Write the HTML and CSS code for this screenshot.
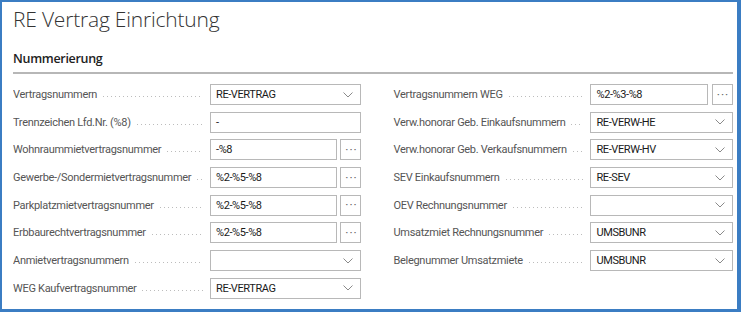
FILE: index.html
```html
<!DOCTYPE html>
<html lang="de">
<head>
  <meta charset="UTF-8">
  <title>RE Vertrag Einrichtung</title>
  <link rel="stylesheet" href="styles.css">
</head>
<body>
  <div class="frame">
    <h1 class="page-title">RE Vertrag Einrichtung</h1>
    <div class="section">
      <h2 class="section-title">Nummerierung</h2>
      <div class="fields">
        <div class="column">
          <div class="row">
            <span class="label">Vertragsnummern</span>
            <div class="control select"><span class="value">RE-VERTRAG</span><svg class="chev" viewBox="0 0 10 6"><path d="M0.5 0.5 L5 5 L9.5 0.5"/></svg></div>
          </div>
          <div class="row">
            <span class="label">Trennzeichen Lfd.Nr. (%8)</span>
            <div class="control"><span class="value">-</span></div>
          </div>
          <div class="row">
            <span class="label">Wohnraummietvertragsnummer</span>
            <div class="control narrow"><span class="value">-%8</span></div>
            <div class="assist">&middot;&middot;&middot;</div>
          </div>
          <div class="row">
            <span class="label">Gewerbe-/Sondermietvertragsnummer</span>
            <div class="control narrow"><span class="value">%2-%5-%8</span></div>
            <div class="assist">&middot;&middot;&middot;</div>
          </div>
          <div class="row">
            <span class="label">Parkplatzmietvertragsnummer</span>
            <div class="control narrow"><span class="value">%2-%5-%8</span></div>
            <div class="assist">&middot;&middot;&middot;</div>
          </div>
          <div class="row">
            <span class="label">Erbbaurechtvertragsnummer</span>
            <div class="control narrow"><span class="value">%2-%5-%8</span></div>
            <div class="assist">&middot;&middot;&middot;</div>
          </div>
          <div class="row">
            <span class="label">Anmietvertragsnummern</span>
            <div class="control select"><span class="value"></span><svg class="chev" viewBox="0 0 10 6"><path d="M0.5 0.5 L5 5 L9.5 0.5"/></svg></div>
          </div>
          <div class="row">
            <span class="label">WEG Kaufvertragsnummer</span>
            <div class="control select"><span class="value">RE-VERTRAG</span><svg class="chev" viewBox="0 0 10 6"><path d="M0.5 0.5 L5 5 L9.5 0.5"/></svg></div>
          </div>
        </div>
        <div class="column right">
          <div class="row">
            <span class="label">Vertragsnummern WEG</span>
            <div class="control narrow"><span class="value">%2-%3-%8</span></div>
            <div class="assist">&middot;&middot;&middot;</div>
          </div>
          <div class="row">
            <span class="label">Verw.honorar Geb. Einkaufsnummern</span>
            <div class="control select"><span class="value">RE-VERW-HE</span><svg class="chev" viewBox="0 0 10 6"><path d="M0.5 0.5 L5 5 L9.5 0.5"/></svg></div>
          </div>
          <div class="row">
            <span class="label">Verw.honorar Geb. Verkaufsnummern</span>
            <div class="control select"><span class="value">RE-VERW-HV</span><svg class="chev" viewBox="0 0 10 6"><path d="M0.5 0.5 L5 5 L9.5 0.5"/></svg></div>
          </div>
          <div class="row">
            <span class="label">SEV Einkaufsnummern</span>
            <div class="control select"><span class="value">RE-SEV</span><svg class="chev" viewBox="0 0 10 6"><path d="M0.5 0.5 L5 5 L9.5 0.5"/></svg></div>
          </div>
          <div class="row">
            <span class="label">OEV Rechnungsnummer</span>
            <div class="control select"><span class="value"></span><svg class="chev" viewBox="0 0 10 6"><path d="M0.5 0.5 L5 5 L9.5 0.5"/></svg></div>
          </div>
          <div class="row">
            <span class="label">Umsatzmiet Rechnungsnummer</span>
            <div class="control select"><span class="value">UMSBUNR</span><svg class="chev" viewBox="0 0 10 6"><path d="M0.5 0.5 L5 5 L9.5 0.5"/></svg></div>
          </div>
          <div class="row">
            <span class="label">Belegnummer Umsatzmiete</span>
            <div class="control select"><span class="value">UMSBUNR</span><svg class="chev" viewBox="0 0 10 6"><path d="M0.5 0.5 L5 5 L9.5 0.5"/></svg></div>
          </div>
        </div>
      </div>
    </div>
  </div>
</body>
</html>
```

FILE: styles.css
```css
html, body {
  margin: 0;
  padding: 0;
  background-color: white;
}
body {
  font-family: 'Open Sans', 'Noto Sans', sans-serif;
}
.frame {
  box-sizing: border-box;
  width: 741px;
  height: 312px;
  border-style: solid;
  border-color: #3b7dc3;
  border-width: 2px 4px 3px 2px;
  padding: 0 4px 0 11px;
  overflow: hidden;
}
.page-title {
  margin: 0;
  padding-top: 3px;
  height: 38px;
  font-size: 21px;
  font-weight: 300;
  color: #333333;
  letter-spacing: -0.2px;
}
.section-title {
  margin: 0;
  padding-top: 7px;
  height: 22px;
  font-size: 12.5px;
  font-weight: 600;
  color: #212121;
  letter-spacing: -0.3px;
  border-bottom: 2px solid #b7b7b7;
}
.fields {
  display: flex;
  padding-top: 10px;
}
.column {
  width: 350px;
  display: flex;
  flex-direction: column;
  gap: 6.7px;
}
.column.right {
  margin-left: 32px;
  width: 341px;
}
.row {
  display: flex;
  align-items: center;
  height: 21px;
}
.label {
  width: 197px;
  flex: none;
  font-family: 'Roboto', 'Open Sans', sans-serif;
  font-size: 11px;
  letter-spacing: -0.3px;
  color: #555555;
  white-space: nowrap;
  display: flex;
  align-items: center;
  overflow: hidden;
}
.label::after {
  content: "";
  flex: 1;
  height: 1px;
  margin: 4px 7px 0 6px;
  background-image: linear-gradient(to right, #bcbcbc 1px, transparent 1px);
  background-size: 4px 1px;
  background-repeat: repeat-x;
}
.control {
  flex: 1;
  box-sizing: border-box;
  height: 21px;
  border: 1px solid #b8b8b8;
  display: flex;
  align-items: center;
  padding: 0 5px;
  font-family: 'Roboto', 'Open Sans', sans-serif;
  font-size: 11px;
  letter-spacing: -0.4px;
  color: #1a1a1a;
}
.control .value {
  flex: 1;
}
.control.narrow {
  flex: none;
  width: 127px;
}
.right .control.narrow {
  width: 118px;
}
.chev {
  width: 10px;
  height: 6px;
  fill: none;
  stroke: #8a8a8a;
  stroke-width: 1;
  margin-right: 2px;
}
.assist {
  margin-left: auto;
  box-sizing: border-box;
  width: 21px;
  height: 21px;
  border: 1px solid #b8b8b8;
  font-family: 'Roboto', sans-serif;
  font-size: 12px;
  color: #666666;
  display: flex;
  align-items: center;
  justify-content: center;
  letter-spacing: 1px;
  padding-left: 1px;
}
```
